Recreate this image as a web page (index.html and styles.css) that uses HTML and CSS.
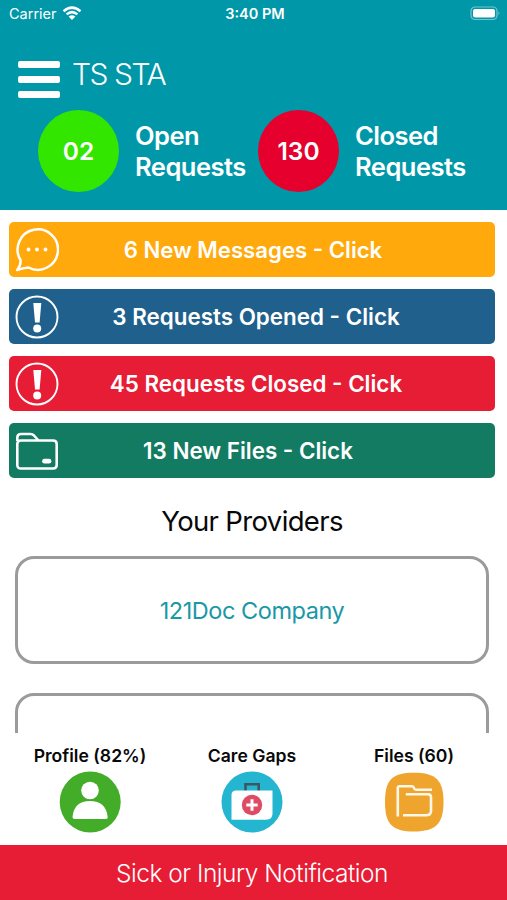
FILE: index.html
```html
<!DOCTYPE html>
<html lang="en">
<head>
<meta charset="utf-8">
<title>TS STA</title>
<link rel="stylesheet" href="styles.css">
</head>
<body>
<div class="app">
  <header class="header">
    <div class="status">
      <div class="carrier"><span>Carrier</span>
        <svg width="20" height="15" viewBox="0 0 20 15" fill="none" stroke="#fff" stroke-width="2.5"><path d="M1.500 5.200Q10 -2 18.500 5.200M4.600 8.400Q10 3.800 15.400 8.400"/><path d="M6.600 10.600Q10 7.800 13.400 10.600L10 14Z" fill="#fff" stroke="none"/></svg>
      </div>
      <span class="time">3:40 PM</span>
      <svg class="battery" width="31" height="15" viewBox="0 0 31 15"><rect x="1" y="1" width="26" height="12.500" rx="4" fill="none" stroke="#75c5cf" stroke-width="1.200"/><rect x="3" y="3" width="22" height="8.500" rx="2" fill="#fff"/><path d="M28.500 5.500q2 1.700 0 3.500z" fill="#75c5cf"/></svg>
    </div>
    <div class="titlebar">
      <div class="burger"><i></i><i></i><i></i></div>
      <h1>TS STA</h1>
    </div>
    <div class="stats">
      <div class="circle green">02</div>
      <div class="label"><span>Open</span><span>Requests</span></div>
      <div class="circle red">130</div>
      <div class="label"><span>Closed</span><span>Requests</span></div>
    </div>
  </header>
  <section class="alerts">
    <a class="alert orange">
      <svg width="44" height="44" viewBox="0 0 44 44" fill="none" stroke="#fff" stroke-width="2.500" stroke-linejoin="round"><path d="M5.500 32A20.200 20.200 0 1 1 13.500 39.500Q8 40 2.200 42Q6 37.500 5.500 32Z"/><g fill="#fff" stroke="none"><circle cx="13.500" cy="21.500" r="1.900"/><circle cx="22" cy="21.500" r="1.900"/><circle cx="30.500" cy="21.500" r="1.900"/></g></svg>
      <span>6 New Messages - Click</span>
    </a>
    <a class="alert blue">
      <svg width="44" height="44" viewBox="0 0 44 44"><circle cx="22" cy="22" r="20.500" fill="none" stroke="#fff" stroke-width="1.900"/><path d="M18.300 8h8l-1.700 19.500h-4.600z" fill="#fff"/><circle cx="22.200" cy="33.500" r="4" fill="#fff"/></svg>
      <span>3 Requests Opened - Click</span>
    </a>
    <a class="alert crimson">
      <svg width="44" height="44" viewBox="0 0 44 44"><circle cx="22" cy="22" r="20.500" fill="none" stroke="#fff" stroke-width="1.900"/><path d="M18.300 8h8l-1.700 19.500h-4.600z" fill="#fff"/><circle cx="22.200" cy="33.500" r="4" fill="#fff"/></svg>
      <span>45 Requests Closed - Click</span>
    </a>
    <a class="alert teal">
      <svg width="44" height="44" viewBox="0 0 44 44" fill="none" stroke="#fff" stroke-width="2.600" stroke-linejoin="round"><path d="M2.300 12V8.500Q2.300 5 6 5H15.500Q17.500 5 19 6.500L23.500 11.500H38Q41.700 11.500 41.700 15V36Q41.700 39.500 38 39.500H6Q2.300 39.500 2.300 36V15Q2.300 11.500 6 11.500H23.500"/><path d="M29.500 32.200h4.500" stroke-width="4.800" stroke-linecap="round"/></svg>
      <span>13 New Files - Click</span>
    </a>
  </section>
  <main class="providers">
    <h2>Your Providers</h2>
    <div class="list">
      <div class="card">121Doc Company</div>
      <div class="card"></div>
    </div>
  </main>
  <nav class="tabs">
    <div class="tab"><span>Profile (82%)</span>
      <svg width="62" height="62" viewBox="0 0 62 62"><circle cx="31.200" cy="31" r="30.500" fill="#43ad29"/><circle cx="31" cy="19.500" r="8.800" fill="#fff"/><path d="M13.500 46Q15 30 31 30T48.700 46Q49 48 47 48H15.500Q13.500 48 13.500 46Z" fill="#fff"/></svg>
    </div>
    <div class="tab"><span>Care Gaps</span>
      <svg width="62" height="62" viewBox="0 0 62 62"><circle cx="31" cy="31" r="30.500" fill="#24b5d1"/><path d="M24.500 20V13.300H37.700V20" fill="none" stroke="#3d5663" stroke-width="2.600"/><path d="M10.500 24Q10.500 19.500 15 19.500H51.500V42.500Q51.500 48.700 45 48.700H10.500Z" fill="#fff"/><circle cx="31" cy="34" r="10.200" fill="#df4b62"/><path d="M31 28.300v11.400M25.300 34h11.400" stroke="#fff" stroke-width="3"/></svg>
    </div>
    <div class="tab"><span>Files (60)</span>
      <svg width="62" height="62" viewBox="0 0 62 62"><path d="M31 1.800C53 1.800 60.500 9.500 60.500 31S53 60.500 31 60.500 2 53 2 31 9 1.800 31 1.800Z" fill="#efa52d"/><path d="M14.800 45.500V17Q14.800 15.200 16.600 15.200H29Q30.500 15.200 31 17Q31.500 18.800 33 18.800H49M22.800 23.300H45Q48 23.300 48 26.300V40Q48 44.200 43 44.200H20" fill="none" stroke="#fff8e8" stroke-width="2.600"/></svg>
    </div>
  </nav>
  <footer class="notify">Sick or Injury Notification</footer>
</div>
</body>
</html>
```
FILE: styles.css
```css
* { box-sizing: border-box; }
body { margin: 0; background: #fff; font-family: Inter, "Liberation Sans", sans-serif; }
h1, h2 { margin: 0; font-weight: 400; }
svg { display: block; flex: none; }
.app { width: 507px; height: 900px; display: flex; flex-direction: column; overflow: hidden; white-space: nowrap; }
.header { height: 210px; background: #0098a8; color: #fff; flex: none; }
.status { height: 26px; padding: 0 6px 0 9px; display: grid; grid-template-columns: 1fr auto 1fr; align-items: center; }
.carrier { display: flex; align-items: center; gap: 5px; font-size: 14.5px; }
.time { font-size: 14.5px; font-weight: 600; }
.battery { justify-self: end; }
.titlebar { height: 84px; padding: 35px 0 0 18px; display: flex; gap: 12px; }
.burger { width: 42px; height: 37px; display: flex; flex-direction: column; justify-content: space-between; }
.burger i { height: 7px; border-radius: 2px; background: #fff; }
h1 { font-size: 30px; line-height: 27px; font-weight: 300; letter-spacing: -1.5px; }
.stats { display: flex; align-items: center; padding-left: 38px; }
.circle { width: 81px; height: 82px; border-radius: 50%; display: flex; align-items: center; justify-content: center; font-size: 24.5px; font-weight: 600; }
.green { background: #32e600; }
.red { background: #e5002d; }
.label { width: 123px; margin-left: 16px; display: flex; flex-direction: column; align-items: flex-start; font-size: 25.5px; font-weight: 600; line-height: 31px; letter-spacing: -0.5px; padding-bottom: 1px; }
.alerts { padding: 12px 12px 0 9px; display: grid; gap: 12px; flex: none; }
.alert { height: 55px; border-radius: 5px; display: grid; grid-template-columns: 44px 1fr 44px; align-items: center; justify-items: center; padding: 0 6px; color: #fff; font-size: 22.4px; font-weight: 600; }
.orange { background: #ffa90c; font-size: 22.2px; }
.blue { background: #20608d; }
.crimson { background: #e71c35; }
.blue span, .crimson span { padding-left: 8px; }
.orange span { padding-left: 2px; }
.teal { background: #127b62; }
.teal span { padding-right: 8px; }
.providers { height: 255px; flex: none; display: flex; flex-direction: column; }
h2 { height: 78px; padding: 7px 3px 0 0; display: flex; align-items: center; justify-content: center; font-size: 27.5px; letter-spacing: -0.65px; color: #080808; }
.list { flex: 1; overflow: hidden; padding: 0 18px 0 15px; }
.card { height: 108px; border: 3px solid #9b9b9b; border-radius: 19px; margin-bottom: 29px; display: flex; align-items: center; justify-content: center; color: #1998a5; font-size: 23.5px; letter-spacing: -0.45px; }
.tabs { height: 112px; flex: none; padding: 12px 12px 0 9px; display: grid; grid-template-columns: repeat(3, 1fr); }
.tab { display: flex; flex-direction: column; align-items: center; font-size: 17.6px; font-weight: 600; line-height: 21px; gap: 5px; color: #080808; }
.notify { height: 55px; flex: none; padding: 1px 3px 0 0; background: #e71c35; color: #fff; display: flex; align-items: center; justify-content: center; font-size: 24.5px; font-weight: 350; letter-spacing: -0.5px; }
```
